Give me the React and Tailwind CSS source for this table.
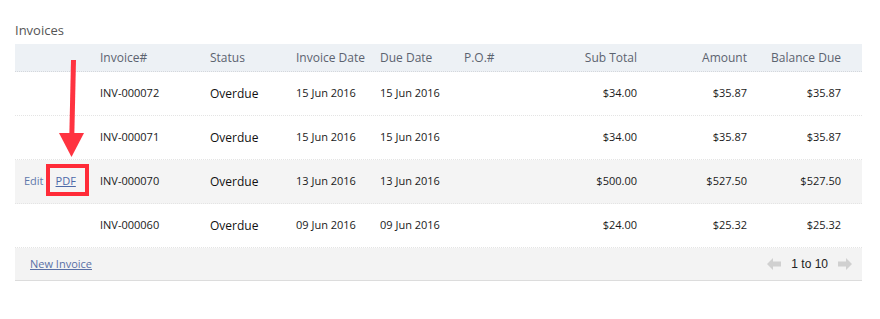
import React from "react";

const rows = [
  { id: "INV-000072", status: "Overdue", inv: "15 Jun 2016", due: "15 Jun 2016", sub: "$34.00", amt: "$35.87", bal: "$35.87" },
  { id: "INV-000071", status: "Overdue", inv: "15 Jun 2016", due: "15 Jun 2016", sub: "$34.00", amt: "$35.87", bal: "$35.87" },
  { id: "INV-000070", status: "Overdue", inv: "13 Jun 2016", due: "13 Jun 2016", sub: "$500.00", amt: "$527.50", bal: "$527.50", hover: true },
  { id: "INV-000060", status: "Overdue", inv: "09 Jun 2016", due: "09 Jun 2016", sub: "$24.00", amt: "$25.32", bal: "$25.32" },
];

const grid = "grid grid-cols-[85px_110px_86px_84px_84px_83px_100px_110px_105px] items-center";

export default function App() {
  return (
    <div className="relative w-[880px] h-[319px] bg-white font-['Open_Sans',sans-serif] text-[12px]">
      <div className="pl-[15px] pt-[20px] w-[862px]">
        <div className="h-[24px] text-[13px] text-[#555] leading-[20px]">Invoices</div>
        <div className={`${grid} h-[28px] bg-[#edf1f5] text-[#5c6370] border-b border-dotted border-[#d4d7dc]`}>
          <div />
          <div>Invoice#</div>
          <div>Status</div>
          <div>Invoice Date</div>
          <div>Due Date</div>
          <div>P.O.#</div>
          <div className="text-right pr-[10px]">Sub Total</div>
          <div className="text-right pr-[10px]">Amount</div>
          <div className="text-right pr-[21px]">Balance Due</div>
        </div>
        {rows.map((r) => (
          <div
            key={r.id}
            className={`${grid} h-[44px] text-[11px] text-[#1a1a1a] border-b border-dotted border-[#e4e4e4] ${r.hover ? "bg-[#f4f4f4]" : "bg-white"}`}
          >
            <div className="pl-[9px] flex gap-[12px]">
              {r.hover && (
                <>
                  <span className="text-[#5f78ab]">Edit</span>
                  <span className="text-[#4c69a8] underline">PDF</span>
                </>
              )}
            </div>
            <div>{r.id}</div>
            <div className="text-[12px] text-[#111]">{r.status}</div>
            <div>{r.inv}</div>
            <div>{r.due}</div>
            <div />
            <div className="text-right pr-[10px]">{r.sub}</div>
            <div className="text-right pr-[10px]">{r.amt}</div>
            <div className="text-right pr-[21px]">{r.bal}</div>
          </div>
        ))}
        <div className="h-[33px] bg-[#f3f3f3] border-b border-[#dcdcdc] flex items-center justify-between pl-[15px] pr-[10px]">
          <span className="text-[11px] text-[#5a70a6] underline">New Invoice</span>
          <div className="flex items-center gap-[10px] font-['Liberation_Sans',sans-serif] text-[12px] text-[#222]">
            <svg width="14" height="12" viewBox="0 0 14 12">
              <path d="M0 6 L6 0 L6 3.5 L14 3.5 L14 8.5 L6 8.5 L6 12 Z" fill="#d0d0d0" />
            </svg>
            <span>1 to 10</span>
            <svg width="14" height="12" viewBox="0 0 14 12">
              <path d="M14 6 L8 0 L8 3.5 L0 3.5 L0 8.5 L8 8.5 L8 12 Z" fill="#d0d0d0" />
            </svg>
          </div>
        </div>
      </div>

      <svg className="absolute left-0 top-0 pointer-events-none" width="880" height="319">
        <line x1="73.5" y1="60" x2="71.8" y2="136" stroke="#ff3340" strokeWidth="5" />
        <polygon points="59,133 84,133 71.5,157" fill="#ff3340" />
      </svg>
      <div className="absolute left-[46px] top-[164px] w-[43px] h-[32px] border-[4px] border-[#ff2b38]" />
    </div>
  );
}
